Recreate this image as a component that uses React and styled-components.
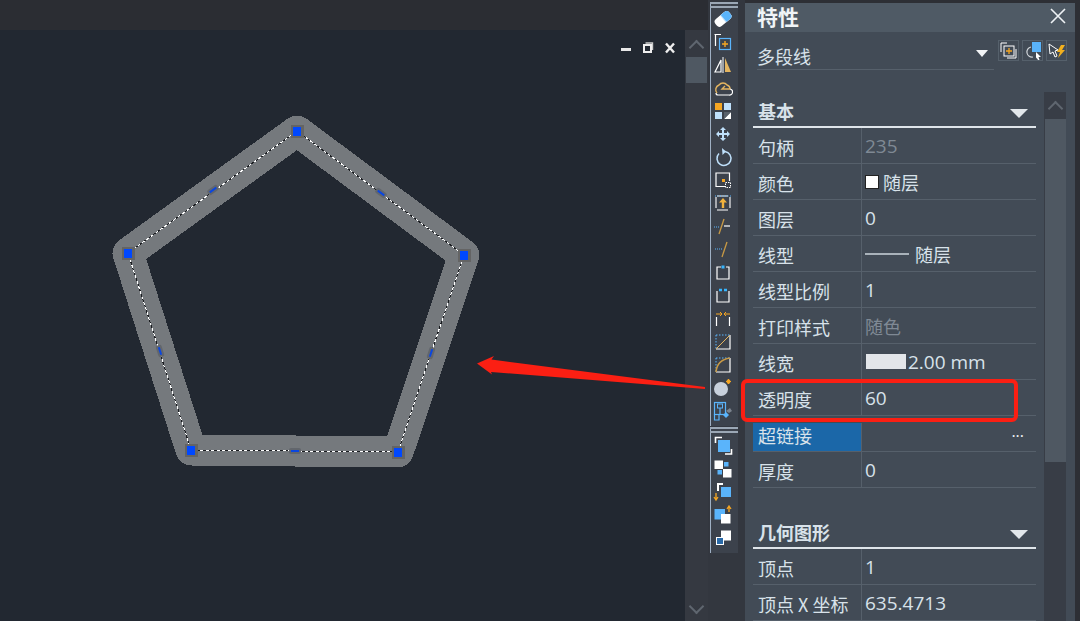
import React from 'react'
import styled, { createGlobalStyle } from 'styled-components'

const GlobalStyle = createGlobalStyle`
    html, body {
        margin: 0;
        padding: 0;
        background: #2d2f35;
    }
`

const W = '#ffffff'
const B = '#5ab4fb'
const O = '#f5a623'
const L = '#bfe0fb'

const toolbarTop = [
    <g transform="rotate(-40 10 10)"><rect x="1" y="5.5" width="18" height="9" rx="3.5" fill={W} /><path d="M10 5.5 H15.5 Q19 5.5 19 9 V11 Q19 14.5 15.5 14.5 H10Z" fill={L} /><path d="M11 5.5 H15.5 Q19 5.5 19 9 V11 Q19 14.5 15.5 14.5 H11Z" fill={B} /></g>,
    <g><path d="M8 2.5 H2.5 V14 M1.5 2.5 H5" stroke={W} strokeWidth="1.2" fill="none" /><rect x="6.5" y="6.5" width="11" height="11" stroke={B} fill="none" strokeWidth="1.2" /><path d="M12 9 V15 M9 12 H15" stroke={O} strokeWidth="1.4" /></g>,
    <g><path d="M8 5 V17 H2Z" stroke={W} fill="none" strokeWidth="1.2" /><path d="M10 2 V18" stroke={W} strokeWidth="1" /><path d="M12 3 L18 17 H12Z" fill="#e5b560" /></g>,
    <g><path d="M4 15 A5 5 0 0 1 6 7 A5 5 0 0 1 14 7 A4 4 0 0 1 17 11 H9 L12 8" stroke="#e5b560" fill="none" strokeWidth="1.4" /><path d="M3 15 A2 2 0 0 0 5 17 H16 A3 3 0 0 0 17 11" stroke={W} fill="none" strokeWidth="1.2" /></g>,
    <g><rect x="2" y="2" width="7" height="7" fill={O} /><rect x="11" y="2" width="7" height="7" fill={L} /><rect x="2" y="11" width="7" height="7" fill={L} /><path d="M11 18 L18 11 V18Z" fill={W} /><path d="M11 11 H18 L11 18Z" fill="#59616b" /></g>,
    <path d="M10 3 L13 6 H11 V9 H14 V7 L17 10 L14 13 V11 H11 V14 H13 L10 17 L7 14 H9 V11 H6 V13 L3 10 L6 7 V9 H9 V6 H7Z" fill={L} />,
    <g><path d="M6 6.5 A7 7 0 1 0 12 4.5" stroke={L} fill="none" strokeWidth="1.5" /><path d="M9 1 L13 4.5 L9.5 8Z" fill={L} /></g>,
    <g><path d="M12 16.5 H3 V3 H16.5 V11" fill="none" stroke={W} strokeWidth="1.2" /><rect x="9" y="9" width="3" height="3" fill={O} /><rect x="12.5" y="12.5" width="5" height="5" fill="none" stroke={W} strokeWidth="1" strokeDasharray="1.5 1" /></g>,
    <g><path d="M4 3 H16 M4 17 H16 M3 4 V16 M17 4 V16" stroke={W} strokeWidth="1.1" strokeDasharray="11 1" /><path d="M2 3 H18" stroke={B} strokeDasharray="1 1.5" /><path d="M10 5 L14 9.5 H11.2 V15 H8.8 V9.5 H6Z" fill="#f2b33d" /></g>,
    <g><path d="M6 18 L11 3" stroke="#c99a45" strokeWidth="1.3" /><path d="M1 11 H6" stroke={B} strokeDasharray="1 1" /><path d="M11 10 H17" stroke={W} strokeWidth="1.2" /></g>,
    <g><path d="M9 18 L14 3" stroke="#c99a45" strokeWidth="1.3" /><path d="M2 10 H10" stroke={B} strokeDasharray="1 1" /></g>,
    <g><path d="M8 4 H4 V16 H16 V4 H13" stroke={W} fill="none" strokeWidth="1.2" /><rect x="8.5" y="2.5" width="3" height="3" fill="#38b6ff" /></g>,
    <g><path d="M4 5 V16 H16 V5" stroke={W} fill="none" strokeWidth="1.2" /><path d="M6 4 H15" stroke="#38b6ff" strokeWidth="2.6" strokeDasharray="3 2" /></g>,
    <g><path d="M3.5 8 V17 M16.5 8 V17" stroke={W} strokeWidth="1.2" /><path d="M3 5 H9 M7 3 L9 5 L7 7 M17 5 H11 M13 3 L11 5 L13 7" stroke={O} fill="none" /></g>,
    <g><path d="M17 3 V17 H3" stroke={W} fill="none" strokeWidth="1.2" /><path d="M3 3 H17 M3 3 V17" stroke={B} strokeDasharray="1.5 1.5" /><path d="M3 17 L17 3" stroke="#e5b560" /></g>,
    <g><path d="M17 3 V17 H3" stroke={W} fill="none" strokeWidth="1.2" /><path d="M3 3 H17 M3 3 V17" stroke={B} strokeDasharray="1.5 1.5" /><path d="M3 17 Q4 5 17 3" stroke="#c99a45" fill="none" strokeWidth="1.6" /></g>,
    <g><circle cx="8" cy="11" r="7" fill="#c7d0dc" /><path d="M14 2 L17 5 M17 2 L14 5 M15.5 1 V6 M13 3.5 H18" stroke={O} strokeWidth="1.2" /></g>,
    <g><rect x="1.5" y="1.5" width="11" height="12" fill="none" stroke={B} strokeWidth="1.2" /><rect x="4.5" y="3" width="5" height="4" fill="#3c424c" stroke={B} /><path d="M7 7 V13 M1.5 13 V19 H6 V13" stroke={B} fill="none" strokeWidth="1.2" /><path d="M10 14 L13 11 L16 14 L13 17Z" fill={B} /><path d="M13 10 L17 7 L19 10 L16 12Z" fill="#7b838d" /></g>,
]

const toolbarBottom = [
    <g><path d="M9 1.5 H2.5 V7 M12 18 H18.5 V13" stroke={W} strokeWidth="1.6" fill="none" /><rect x="5" y="4" width="12" height="12" fill={B} /></g>,
    <g><rect x="1.5" y="1.5" width="8.5" height="8.5" fill={W} /><rect x="11" y="3" width="4.5" height="4.5" fill={B} /><rect x="4.5" y="11" width="4.5" height="4.5" fill={B} /><rect x="10" y="10" width="8.5" height="8.5" fill={W} /></g>,
    <g><path d="M10 2 H5 V9" stroke={W} strokeWidth="2" fill="none" /><rect x="8" y="5" width="10" height="10" fill={B} /><path d="M3 11 V17 M1 15 L3 18 L5 15" stroke={O} fill="none" strokeWidth="1.3" /></g>,
    <g><rect x="1.5" y="4" width="10.5" height="10.5" fill={B} /><rect x="8" y="9" width="9.5" height="9.5" fill={W} /><path d="M16 7 V2 M14 4 L16 1 L18 4" stroke={O} fill="none" strokeWidth="1.3" /></g>,
    <g><rect x="8" y="2.5" width="10" height="10" fill={W} /><rect x="3.5" y="9.5" width="7" height="7" fill="#2a6aa8" stroke={W} /></g>,
]

const basicRows = [
    { label: '句柄', value: '235', muted: true },
    { label: '颜色', value: '随层', swatch: 'color', cjk: true },
    { label: '图层', value: '0' },
    { label: '线型', value: '随层', swatch: 'line', cjk: true },
    { label: '线型比例', value: '1' },
    { label: '打印样式', value: '随色', muted: true, cjk: true },
    { label: '线宽', value: '2.00 mm', swatch: 'width' },
    { label: '透明度', value: '60' },
    { label: '超链接', value: '', selected: true },
    { label: '厚度', value: '0' },
]

const geometryRows = [
    { label: '顶点', value: '1' },
    { label: '顶点 X 坐标', value: '635.4713' },
]

const vertices = [[297, 131], [464, 255], [398, 452], [191, 450], [128, 253]]
const midpoints = [[213, 190, -36], [381, 193, 36], [431, 353, -72], [295, 451, 0], [160, 351, 72]]
const outline = vertices.map(v => v.join(',')).join(' ')

function Icon({ children }) {
    return <IconSvg viewBox="0 0 20 20">{children}</IconSvg>
}

function PropertyRow({ row }) {
    return (
        <Row>
            <Label $selected={row.selected}>{row.label}</Label>
            <Value $muted={row.muted} $cjk={row.cjk}>
                {row.swatch && <Swatch $kind={row.swatch} />}
                {row.value}
                {row.selected && <More>...</More>}
            </Value>
        </Row>
    )
}

function App() {
    return (
        <Page>
            <GlobalStyle />
            <Workspace>
                <TopStrip />
                <CanvasRow>
                    <Canvas>
                        <Drawing viewBox="0 30 685 591">
                            <polygon points={outline} fill="none" stroke="#75797d" strokeWidth="31" strokeLinejoin="round" shapeRendering="crispEdges" />
                            <polygon points={outline} fill="none" stroke="#1a1c20" strokeWidth="1" shapeRendering="crispEdges" />
                            <polygon points={outline} fill="none" stroke="#fff" strokeWidth="1" strokeDasharray="3 2.5" shapeRendering="crispEdges" />
                            {midpoints.map(([x, y, r]) => (
                                <g key={x} transform={`rotate(${r} ${x} ${y})`}>
                                    <rect x={x - 6} y={y - 3} width="12" height="6" rx="2" fill="#62666c" />
                                    <rect x={x - 4} y={y - 1} width="8" height="2" fill="#0a46e0" />
                                </g>
                            ))}
                            {vertices.map(([x, y]) => (
                                <g key={x}>
                                    <rect x={x - 6.5} y={y - 6.5} width="13" height="13" fill="#646464" shapeRendering="crispEdges" />
                                    <rect x={x - 4} y={y - 4} width="8" height="9" fill="#0048ff" shapeRendering="crispEdges" />
                                </g>
                            ))}
                        </Drawing>
                        <WindowControls>
                            <svg width="12" height="12" viewBox="0 0 12 12"><rect x="1" y="6" width="10" height="3" fill="#e8e8e8" /></svg>
                            <svg width="12" height="12" viewBox="0 0 12 12"><path d="M3.5 1 H10.5 V8" stroke="#ccc" strokeWidth="1.4" fill="none" /><rect x="2" y="3" width="7" height="7" stroke="#eee" strokeWidth="2" fill="none" /></svg>
                            <svg width="12" height="12" viewBox="0 0 12 12"><path d="M2 1.5 L10 10.5 M10 1.5 L2 10.5" stroke="#eee" strokeWidth="2.4" /></svg>
                        </WindowControls>
                    </Canvas>
                    <ScrollTrack>
                        <Chevron />
                        <ScrollThumb />
                        <Chevron $down />
                    </ScrollTrack>
                </CanvasRow>
            </Workspace>
            <ToolColumn>
                <Toolbar>
                    <Gripper />
                    <ToolList>
                        {toolbarTop.map((icon, i) => <Icon key={i}>{icon}</Icon>)}
                    </ToolList>
                </Toolbar>
                <Toolbar $second>
                    <Gripper />
                    <ToolList $second>
                        {toolbarBottom.map((icon, i) => <Icon key={i}>{icon}</Icon>)}
                    </ToolList>
                </Toolbar>
            </ToolColumn>
            <Panel>
                <TitleBar>
                    特性
                    <CloseIcon width="18" height="18" viewBox="0 0 18 18"><path d="M2 2 L16 16 M16 2 L2 16" stroke="#eef2f5" strokeWidth="1.6" /></CloseIcon>
                </TitleBar>
                <SelectorRow>
                    <Selector>
                        多段线
                        <SmallCaret />
                    </Selector>
                    <SelectorButton>
                        <svg width="19" height="19" viewBox="0 0 19 19"><path d="M8 2 H2 V11 M17 8 V17 H8" stroke="#fff" fill="none" /><rect x="5" y="5" width="10" height="10" stroke="#fff" fill="none" /><path d="M10 7 V13 M7 10 H13" stroke={O} strokeWidth="1.3" /></svg>
                    </SelectorButton>
                    <SelectorButton>
                        <svg width="19" height="19" viewBox="0 0 19 19"><rect x="9" y="1" width="9" height="10" fill={B} /><path d="M8 6 A5 5 0 1 0 10 16" stroke="#cfd4d9" fill="none" strokeWidth="1.2" /><path d="M13 11 L18 16 H15.5 L16.5 19 L15 19 L13.5 16.5 L13 18Z" fill="#fff" /></svg>
                    </SelectorButton>
                    <SelectorButton>
                        <svg width="19" height="19" viewBox="0 0 19 19"><path d="M2 3 L11 9 L8 10 L10 15 L8 16 L6 11 L3 13Z" stroke="#fff" fill="none" /><path d="M14 4 H18 L15 9 H18 L11 17 L13 11 H10Z" fill="#f2b01e" /></svg>
                    </SelectorButton>
                </SelectorRow>
                <Body>
                    <Sections>
                        <SectionHead>
                            基本
                            <Caret />
                        </SectionHead>
                        {basicRows.map(row => <PropertyRow key={row.label} row={row} />)}
                        <SectionHead $next>
                            几何图形
                            <Caret />
                        </SectionHead>
                        {geometryRows.map(row => <PropertyRow key={row.label} row={row} />)}
                    </Sections>
                    <PanelScroll>
                        <PanelChevronBox><Chevron /></PanelChevronBox>
                        <PanelThumb />
                    </PanelScroll>
                </Body>
            </Panel>
            <HighlightBox />
            <ArrowOverlay viewBox="0 0 1080 621">
                <path d="M477 363.5 L494 356 L491.5 359.5 L705 387 L705 389 L491 372 L492 374.5Z" fill="#fb1f13" />
            </ArrowOverlay>
        </Page>
    )
}

const Page = styled.div`
    position: relative;
    display: flex;
    width: 1080px;
    height: 621px;
    overflow: hidden;
    background: #2d2f35;
    font-family: "Noto Sans CJK SC", "Liberation Sans", sans-serif;
`
const Workspace = styled.div`
    display: flex;
    flex-direction: column;
    width: 708px;
    flex: none;
`
const TopStrip = styled.div`
    height: 30px;
    flex: none;
    background: #2b2d33;
`
const CanvasRow = styled.div`
    display: flex;
    flex: 1;
`
const Canvas = styled.div`
    position: relative;
    width: 685px;
    background: #222831;
`
const Drawing = styled.svg`
    display: block;
    width: 685px;
    height: 591px;
`
const WindowControls = styled.div`
    position: absolute;
    top: 12px;
    right: 9px;
    display: flex;
    gap: 10px;
    svg {
        display: block;
    }
`
const ScrollTrack = styled.div`
    width: 23px;
    display: flex;
    flex-direction: column;
    align-items: center;
    background: #353941;
    padding-top: 12px;
    box-sizing: border-box;
`
const Chevron = styled.span`
    display: block;
    width: 9px;
    height: 9px;
    border-left: 2px solid #5f666f;
    border-top: 2px solid #5f666f;
    transform: rotate(${p => (p.$down ? '225deg' : '45deg')});
    ${p => p.$down && 'margin-top: auto; margin-bottom: 9px;'}
`
const ScrollThumb = styled.div`
    width: 21px;
    height: 26px;
    margin-top: 4px;
    background: #4f5862;
`
const ToolColumn = styled.div`
    width: 37px;
    flex: none;
    display: flex;
    flex-direction: column;
    padding-left: 2px;
    padding-right: 7px;
    box-sizing: border-box;
    background: #33373f;
`
const Toolbar = styled.div`
    width: 28px;
    margin-top: ${p => (p.$second ? '1px' : '2px')};
    background: #3c424c;
    border-left: 1px solid #9fb0c4;
    box-sizing: border-box;
`
const Gripper = styled.div`
    height: 2px;
    border-bottom: 2px solid #9ba7b5;
    border-top: 2px solid #9ba7b5;
    margin-left: -1px;
`
const ToolList = styled.div`
    display: flex;
    flex-direction: column;
    align-items: center;
    gap: 3.05px;
    padding-top: ${p => (p.$second ? '3px' : '1px')};
    padding-bottom: 5px;
    padding-right: 3px;
`
const IconSvg = styled.svg`
    display: block;
    width: 20px;
    height: 20px;
`
const Panel = styled.div`
    width: 330px;
    flex: none;
    margin-top: 3px;
    background: #424b56;
    color: #d8e2ea;
    display: flex;
    flex-direction: column;
`
const TitleBar = styled.div`
    height: 29px;
    flex: none;
    box-sizing: border-box;
    padding: 0 8px 3px 12px;
    background: #4f5a65;
    display: flex;
    align-items: center;
    justify-content: space-between;
    font-size: 21px;
    line-height: 26px;
    font-weight: 700;
    color: #f0f4f7;
`
const CloseIcon = styled.svg`
    display: block;
`
const SelectorRow = styled.div`
    height: 38px;
    flex: none;
    display: flex;
    align-items: flex-start;
    padding: 8px 0 0 12px;
    box-sizing: border-box;
`
const Selector = styled.div`
    width: 237px;
    height: 30px;
    flex: none;
    box-sizing: border-box;
    border-bottom: 1px solid #56606b;
    margin-right: 4px;
    font-size: 18px;
    line-height: 33px;
    position: relative;
`
const SmallCaret = styled.span`
    position: absolute;
    right: 6px;
    top: 10px;
    border-left: 6px solid transparent;
    border-right: 6px solid transparent;
    border-top: 7px solid #f2f4f6;
`
const SelectorButton = styled.div`
    width: 21px;
    height: 21px;
    flex: none;
    box-sizing: border-box;
    border: 1px solid #55606b;
    margin-right: 3px;
    display: flex;
    align-items: center;
    justify-content: center;
    svg {
        display: block;
    }
`
const Body = styled.div`
    display: flex;
    flex: 1;
    padding-left: 8px;
    gap: 8px;
`
const Sections = styled.div`
    width: 283px;
    flex: none;
`
const SectionHead = styled.div`
    height: 32px;
    margin-top: ${p => (p.$next ? '29px' : '26px')};
    box-sizing: border-box;
    border-bottom: 2px solid #dfe5ea;
    padding-left: 5px;
    display: flex;
    align-items: center;
    justify-content: space-between;
    font-size: 18px;
    font-weight: 700;
    padding-right: 8px;
`
const Caret = styled.span`
    border-left: 9px solid transparent;
    border-right: 9px solid transparent;
    border-top: 9px solid #e2e7eb;
    margin-top: 5px;
`
const Row = styled.div`
    height: 36px;
    display: flex;
    box-sizing: border-box;
    border-bottom: 1px solid #56606b;
    font-size: 18px;
`
const Label = styled.div`
    width: 109px;
    flex: none;
    box-sizing: border-box;
    border-right: 1px solid #56606b;
    padding-left: 5px;
    white-space: nowrap;
    background: ${p => (p.$selected ? '#1b67a8' : 'transparent')};
    margin-top: ${p => (p.$selected ? '7px' : '0')};
    line-height: ${p => (p.$selected ? '24px' : '38px')};
`
const Value = styled.div`
    flex: 1;
    display: flex;
    align-items: center;
    padding-left: 3px;
    font-family: "Open Sans", "Noto Sans CJK SC", sans-serif;
    font-size: ${p => (p.$cjk ? '18px' : '19px')};
    position: relative;
    color: ${p => (p.$muted ? '#7f8994' : '#d8e2ea')};
`
const Swatch = styled.span`
    display: block;
    flex: none;
    ${p => p.$kind === 'color' && 'width: 14px; height: 14px; background: #fff; border: 1px solid #222; box-sizing: border-box; margin-right: 4px;'}
    ${p => p.$kind === 'line' && 'width: 44px; height: 2px; background: #a9b2ba; margin-right: 6px;'}
    ${p => p.$kind === 'width' && 'width: 40px; height: 15px; background: #e3e6ea; margin: 0 2px 0 1px;'}
`
const More = styled.span`
    position: absolute;
    right: 12px;
    top: 4px;
    font-size: 16px;
    color: #eef2f5;
`
const PanelScroll = styled.div`
    width: 22px;
    margin-top: 22px;
    background: #383d46;
`
const PanelChevronBox = styled.div`
    height: 27px;
    display: flex;
    align-items: center;
    justify-content: center;
    padding-top: 6px;
    box-sizing: border-box;
`
const PanelThumb = styled.div`
    height: 343px;
    margin-left: 1px;
    background: #4f5862;
`
const HighlightBox = styled.div`
    position: absolute;
    left: 741px;
    top: 379px;
    width: 277px;
    height: 43px;
    box-sizing: border-box;
    border: 4px solid #fb1f13;
    border-radius: 6px;
`
const ArrowOverlay = styled.svg`
    position: absolute;
    inset: 0;
    width: 1080px;
    height: 621px;
    pointer-events: none;
`

export default App
